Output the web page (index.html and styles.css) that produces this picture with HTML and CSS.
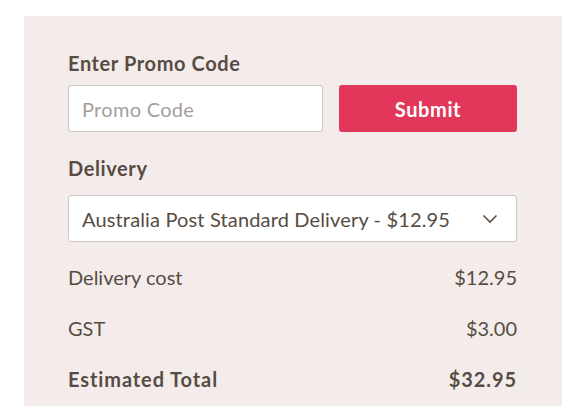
FILE: index.html
```html
<!DOCTYPE html>
<html>
<head>
<meta charset="utf-8">
<link rel="stylesheet" href="styles.css">
</head>
<body>
<div class="panel">
  <div class="label">Enter Promo Code</div>
  <div class="promo">
    <div class="input">Promo Code</div>
    <div class="btn">Submit</div>
  </div>
  <div class="label delivery-label">Delivery</div>
  <div class="select">
    <span>Australia Post Standard Delivery - $12.95</span>
    <svg class="chev" width="16" height="10" viewBox="0 0 16 10"><path d="M1.5 1.5 L8 8 L14.5 1.5" fill="none" stroke="#5a5048" stroke-width="1.6"/></svg>
  </div>
  <div class="row"><span>Delivery cost</span><span>$12.95</span></div>
  <div class="row"><span>GST</span><span>$3.00</span></div>
  <div class="row total"><span>Estimated Total</span><span>$32.95</span></div>
</div>
</body>
</html>
```
FILE: styles.css
```css
html, body { margin: 0; padding: 0; background: #fff; }
body { font-family: Lato, "Open Sans", sans-serif; color: #574c44; }
.panel {
  margin: 16px 20px 0 24px;
  background: #f4ecea;
  padding: 34px 45px 20px 44px;
  height: 390px;
  box-sizing: border-box;
}
.label { font-size: 20px; font-weight: 700; line-height: 26px; letter-spacing: 0.6px; }
.promo { display: flex; gap: 16px; margin-top: 9px; }
.input {
  width: 255px; height: 47px; box-sizing: border-box;
  background: #fff; border: 1px solid #ccc6c4; border-radius: 3px;
  font-size: 20px; color: #a39e9c; padding-left: 13px; letter-spacing: 0.3px;
  display: flex; align-items: center;
}
.btn {
  flex: 1; height: 47px; background: #e2375a; border-radius: 3px;
  color: #fff; font-weight: 700; font-size: 20px; letter-spacing: 0.6px;
  display: flex; align-items: center; justify-content: center;
}
.delivery-label { margin-top: 23px; }
.select {
  margin-top: 14px; height: 47px; box-sizing: border-box;
  background: #fff; border: 1px solid #ccc6c4; border-radius: 3px;
  font-size: 20px; padding: 0 18px 0 13px; letter-spacing: 0.15px;
  display: flex; align-items: center; justify-content: space-between;
}
.row {
  display: flex; justify-content: space-between;
  font-size: 20px; line-height: 26px;
}
.row + .row { margin-top: 25px; }
.select + .row { margin-top: 22px; }
.total { font-weight: 700; letter-spacing: 0.9px; }
```
